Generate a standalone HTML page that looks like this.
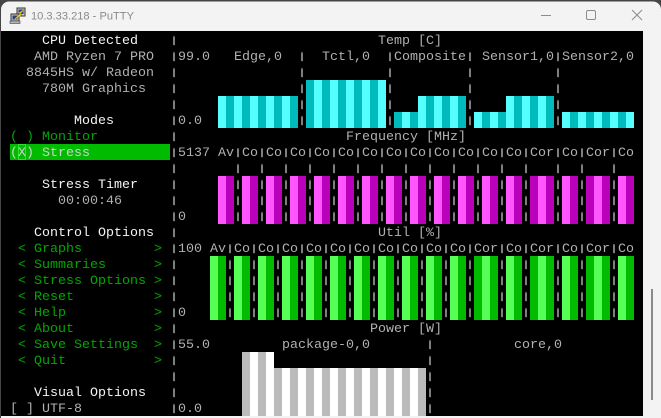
<!DOCTYPE html>
<html>
<head>
<meta charset="utf-8">
<title>PuTTY</title>
<style>
html,body{margin:0;padding:0;background:#454545;width:661px;height:418px;overflow:hidden}
svg{display:block;position:absolute;left:0;top:0}
text{white-space:pre;font-family:"Liberation Mono",monospace;font-size:13.333px;fill:#b0b0b0}
.w{fill:#f4f4f4}
.g{fill:#00a800}
.h{fill:#d0d0d0}
.t{font-family:"Liberation Sans",sans-serif;font-size:11.1px;fill:#8a8a8a}
.b{shape-rendering:crispEdges;fill:none}
.p text{fill:#9a9a9a;stroke:#9a9a9a;stroke-width:.5px}
</style>
</head>
<body>
<svg width="661" height="418" viewBox="0 0 661 418" xmlns="http://www.w3.org/2000/svg">
<!-- window -->
<rect x="1" y="1.5" width="660" height="430" rx="8" fill="#f3f3f3"/>
<rect x="1" y="31" width="642" height="385" fill="#000"/>
<rect x="651" y="289" width="2" height="111" fill="#8a8a8a"/>

<!-- title bar icon -->
<g>
<rect x="17" y="8" width="8" height="8" fill="#c8c8c8" stroke="#333" stroke-width="1"/>
<rect x="18.5" y="9.5" width="5" height="4.5" fill="#2c3f8c"/>
<rect x="11" y="14" width="8" height="7" fill="#c8c8c8" stroke="#333" stroke-width="1"/>
<rect x="12.5" y="15.5" width="5" height="4" fill="#2c3f8c"/>
<rect x="10" y="21" width="10" height="2.5" fill="#b5b5b5" stroke="#444" stroke-width=".6"/>
<path d="M23 10l-5 3.2 2 .6-5.500 5 1 .4 6.500-4.400-1.800-.8 3.800-3.800z" fill="#f2d21a" stroke="#8a7a10" stroke-width=".4"/>
</g>
<text class="t" x="31" y="19.500">10.3.33.218 - PuTTY</text>

<!-- window controls -->
<path d="M541 15.500h10" stroke="#8c8c8c" stroke-width="1" fill="none"/>
<rect x="586.500" y="10.500" width="9" height="9" rx="1.500" fill="none" stroke="#8c8c8c" stroke-width="1"/>
<path d="M632 10l10 10M642 10l-10 10" stroke="#8c8c8c" stroke-width="1" fill="none"/>

<!-- highlight -->
<rect x="10" y="144" width="160" height="16" fill="#00bb00"/>
<rect x="18.500" y="144.500" width="7" height="15" fill="none" stroke="#33dd33" stroke-width="1"/>

<!-- temp bars -->
<g class="b">
<path stroke="#00bbbb" stroke-width="32" d="M218 112H298M418 112H466M506 112H554"/>
<path stroke="#00bbbb" stroke-width="48" d="M306 104H386"/>
<path stroke="#00bbbb" stroke-width="16" d="M394 120H418M474 120H506M562 120H634"/>
<path stroke="#55ffff" stroke-width="32" d="M218 112h8M234 112h8M250 112h8M266 112h8M282 112h8M418 112h8M434 112h8M450 112h8M506 112h8M522 112h8M538 112h8"/>
<path stroke="#55ffff" stroke-width="48" d="M314 104h8M330 104h8M346 104h8M362 104h8M378 104h8"/>
<path stroke="#55ffff" stroke-width="16" d="M402 120h8M474 120h8M490 120h8M562 120h8M578 120h8M594 120h8M610 120h8M626 120h8"/>
<!-- frequency bars -->
<path stroke="#bb00bb" stroke-width="48" d="M218 200h16M242 200h16M266 200h16M290 200h16M314 200h16M338 200h16M362 200h16M386 200h16M410 200h16M434 200h16M458 200h16M482 200h16M506 200h16M530 200h24M562 200h16M586 200h24M618 200h16"/>
<path stroke="#ff55ff" stroke-width="48" d="M218 200h8M242 200h8M266 200h8M290 200h8M314 200h8M338 200h8M362 200h8M386 200h8M410 200h8M434 200h8M458 200h8M482 200h8M506 200h8M538 200h8M562 200h8M594 200h8M618 200h8"/>
<!-- util bars -->
<path stroke="#00bb00" stroke-width="64" d="M210 288h16M234 288h16M258 288h16M282 288h16M306 288h16M330 288h16M354 288h16M378 288h16M402 288h16M426 288h16M450 288h16M474 288h24M506 288h16M530 288h24M562 288h16M586 288h24M618 288h16"/>
<path stroke="#55ff55" stroke-width="64" d="M210 288h8M234 288h8M258 288h8M282 288h8M306 288h8M330 288h8M354 288h8M378 288h8M402 288h8M426 288h8M450 288h8M482 288h8M506 288h8M538 288h8M562 288h8M594 288h8M618 288h8"/>
<!-- power bars -->
<path stroke="#bbbbbb" stroke-width="64" d="M242 384h32"/>
<path stroke="#bbbbbb" stroke-width="48" d="M274 392H426"/>
<path stroke="#ffffff" stroke-width="64" d="M250 384h8M266 384h8"/>
<path stroke="#ffffff" stroke-width="48" d="M282 392h8M298 392h8M314 392h8M330 392h8M346 392h8M362 392h8M378 392h8M394 392h8M410 392h8"/>
</g>

<!-- left panel text -->
<text class="w" x="42" y="44">CPU Detected</text>
<text x="34" y="60">AMD Ryzen 7 PRO</text>
<text x="26" y="76">8845HS w/ Radeon</text>
<text x="42" y="92">780M Graphics</text>
<text class="w" x="74" y="124">Modes</text>
<text class="g" x="10" y="140">( ) </text>
<text class="g" x="42" y="140">Monitor</text>
<text class="h" x="10" y="156">(X) </text>
<text class="h" x="42" y="156">Stress</text>
<text class="w" x="42" y="188">Stress Timer</text>
<text x="58" y="204">00:00:46</text>
<text class="w" x="34" y="236">Control Options</text>
<text class="g" x="18" y="252">&lt; Graphs</text><text class="g" x="154" y="252">&gt;</text>
<text class="g" x="18" y="268">&lt; Summaries</text><text class="g" x="154" y="268">&gt;</text>
<text class="g" x="18" y="284">&lt; Stress Options</text><text class="g" x="154" y="284">&gt;</text>
<text class="g" x="18" y="300">&lt; Reset</text><text class="g" x="154" y="300">&gt;</text>
<text class="g" x="18" y="316">&lt; Help</text><text class="g" x="154" y="316">&gt;</text>
<text class="g" x="18" y="332">&lt; About</text><text class="g" x="154" y="332">&gt;</text>
<text class="g" x="18" y="348">&lt; Save Settings</text><text class="g" x="154" y="348">&gt;</text>
<text class="g" x="18" y="364">&lt; Quit</text><text class="g" x="154" y="364">&gt;</text>
<text class="w" x="34" y="396">Visual Options</text>
<text x="10" y="412">[ ]</text>
<text x="42" y="412">UTF-8</text>

<!-- graph text -->
<text x="378" y="44">Temp [C]</text>
<text x="178" y="60">99.0</text>
<text x="234" y="60">Edge,0</text>
<text x="322" y="60">Tctl,0</text>
<text x="394" y="60">Composite</text>
<text x="482" y="60">Sensor1,0</text>
<text x="562" y="60">Sensor2,0</text>
<text x="178" y="124">0.0</text>
<text x="346" y="140">Frequency [MHz]</text>
<text x="178" y="156">5137</text>
<text x="218" y="156">Av</text>
<text x="242" y="156">Co</text><text x="266" y="156">Co</text><text x="290" y="156">Co</text><text x="314" y="156">Co</text><text x="338" y="156">Co</text><text x="362" y="156">Co</text><text x="386" y="156">Co</text><text x="410" y="156">Co</text><text x="434" y="156">Co</text><text x="458" y="156">Co</text><text x="482" y="156">Co</text><text x="506" y="156">Co</text><text x="530" y="156">Cor</text><text x="562" y="156">Co</text><text x="586" y="156">Cor</text><text x="618" y="156">Co</text>
<text x="178" y="220">0</text>
<text x="378" y="236">Util [%]</text>
<text x="178" y="252">100</text>
<text x="210" y="252">Av</text>
<text x="234" y="252">Co</text><text x="258" y="252">Co</text><text x="282" y="252">Co</text><text x="306" y="252">Co</text><text x="330" y="252">Co</text><text x="354" y="252">Co</text><text x="378" y="252">Co</text><text x="402" y="252">Co</text><text x="426" y="252">Co</text><text x="450" y="252">Co</text><text x="474" y="252">Cor</text><text x="506" y="252">Co</text><text x="530" y="252">Cor</text><text x="562" y="252">Co</text><text x="586" y="252">Cor</text><text x="618" y="252">Co</text>
<text x="178" y="316">0</text>
<text x="370" y="332">Power [W]</text>
<text x="178" y="348">55.0</text>
<text x="282" y="348">package-0,0</text>
<text x="514" y="348">core,0</text>
<text x="178" y="412">0.0</text>

<!-- vertical separators (short pipes) -->
<g class="p">
<g transform="translate(0,43) scale(1,.72)"><text x="170">|</text></g>
<g transform="translate(0,59) scale(1,.72)"><text x="170 298 386 466 554">|||||</text></g>
<g transform="translate(0,75) scale(1,.72)"><text x="170 298 386 466 554">|||||</text></g>
<g transform="translate(0,91) scale(1,.72)"><text x="170 298 386 466 554">|||||</text></g>
<g transform="translate(0,107) scale(1,.72)"><text x="170 298 386 466 554">|||||</text></g>
<g transform="translate(0,123) scale(1,.72)"><text x="170 298 386 466 554">|||||</text></g>
<g transform="translate(0,139) scale(1,.72)"><text x="170">|</text></g>
<g transform="translate(0,155) scale(1,.72)"><text x="170 234 258 282 306 330 354 378 402 426 450 474 498 522 554 578 610">|||||||||||||||||</text></g>
<g transform="translate(0,171) scale(1,.72)"><text x="170 234 258 282 306 330 354 378 402 426 450 474 498 522 554 578 610">|||||||||||||||||</text></g>
<g transform="translate(0,187) scale(1,.72)"><text x="170 234 258 282 306 330 354 378 402 426 450 474 498 522 554 578 610">|||||||||||||||||</text></g>
<g transform="translate(0,203) scale(1,.72)"><text x="170 234 258 282 306 330 354 378 402 426 450 474 498 522 554 578 610">|||||||||||||||||</text></g>
<g transform="translate(0,219) scale(1,.72)"><text x="170 234 258 282 306 330 354 378 402 426 450 474 498 522 554 578 610">|||||||||||||||||</text></g>
<g transform="translate(0,235) scale(1,.72)"><text x="170">|</text></g>
<g transform="translate(0,251) scale(1,.72)"><text x="170 226 250 274 298 322 346 370 394 418 442 466 498 522 554 578 610">|||||||||||||||||</text></g>
<g transform="translate(0,267) scale(1,.72)"><text x="170 226 250 274 298 322 346 370 394 418 442 466 498 522 554 578 610">|||||||||||||||||</text></g>
<g transform="translate(0,283) scale(1,.72)"><text x="170 226 250 274 298 322 346 370 394 418 442 466 498 522 554 578 610">|||||||||||||||||</text></g>
<g transform="translate(0,299) scale(1,.72)"><text x="170 226 250 274 298 322 346 370 394 418 442 466 498 522 554 578 610">|||||||||||||||||</text></g>
<g transform="translate(0,315) scale(1,.72)"><text x="170 226 250 274 298 322 346 370 394 418 442 466 498 522 554 578 610">|||||||||||||||||</text></g>
<g transform="translate(0,331) scale(1,.72)"><text x="170">|</text></g>
<g transform="translate(0,347) scale(1,.72)"><text x="170 426">||</text></g>
<g transform="translate(0,363) scale(1,.72)"><text x="170 426">||</text></g>
<g transform="translate(0,379) scale(1,.72)"><text x="170 426">||</text></g>
<g transform="translate(0,395) scale(1,.72)"><text x="170 426">||</text></g>
<g transform="translate(0,411) scale(1,.72)"><text x="170 426">||</text></g>
</g>
</svg>
</body>
</html>
